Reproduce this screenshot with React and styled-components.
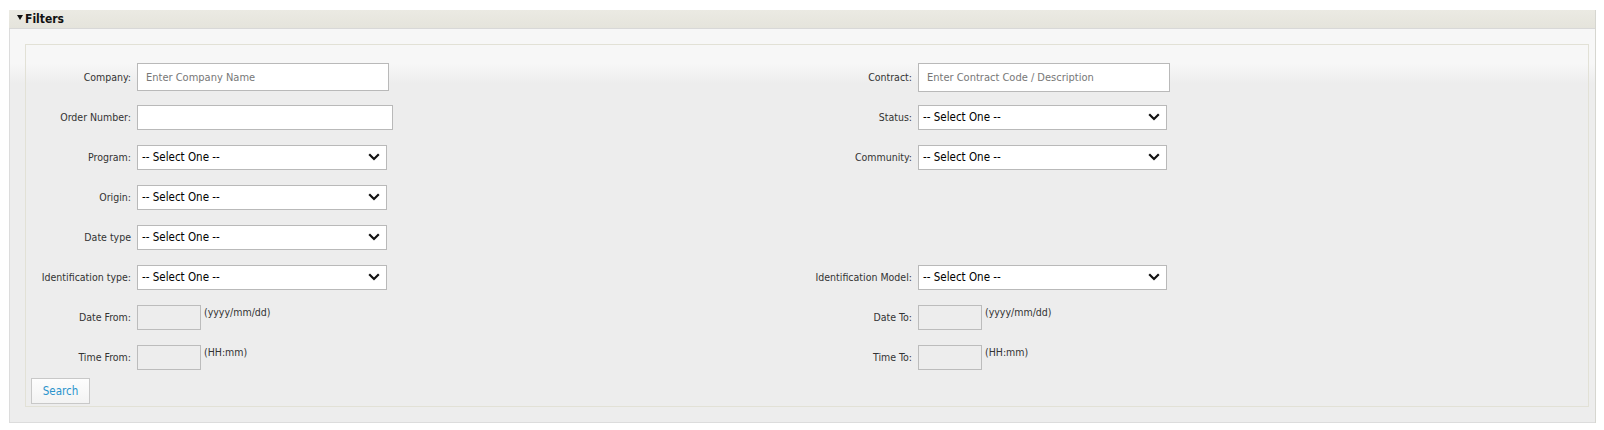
import styled, { createGlobalStyle } from 'styled-components';

const GlobalStyle = createGlobalStyle`
  html, body {
    margin: 0;
    padding: 0;
    background: #ffffff;
    font-family: "DejaVu Sans Condensed", "DejaVu Sans", sans-serif;
  }
`;

const Page = styled.div`
  padding: 10px 8px 7px 9px;
`;

const Panel = styled.section`
  border-right: 1px solid #d6d6d0;
`;

const PanelHeader = styled.div`
  height: 18px;
  background: linear-gradient(180deg, #ebeae3 0%, #e5e4dc 100%);
  display: flex;
  align-items: center;
  padding-left: 8px;
  gap: 2px;
  font-size: 12px;
  font-weight: bold;
  color: #111;
  border-bottom: 1px solid #d8d8d8;
`;

const Caret = styled.span`
  width: 0;
  height: 0;
  border-left: 3.5px solid transparent;
  border-right: 3.5px solid transparent;
  border-top: 5px solid #111;
  margin-bottom: 4px;
`;

const PanelBody = styled.div`
  border-left: 1px solid #dcdcdc;
  border-bottom: 1px solid #dcdcdc;
  background: linear-gradient(180deg, #f7f7f7 0px, #f7f7f7 35px, #ededed 55px, #ededed 100%);
  padding: 15px 6px 15px 15px;
`;

const Fieldset = styled.div`
  border: 1px solid #e2e1d6;
  padding: 12px 0 2px 0;
`;

const FormGrid = styled.div`
  display: grid;
  grid-template-columns: 105px 619px 150px 1fr;
  grid-auto-rows: 40px;
  column-gap: 6px;
  align-items: center;
`;

const Label = styled.label`
  text-align: right;
  font-size: 10.5px;
  color: #333;
  white-space: nowrap;
`;

const FieldCell = styled.div`
  display: flex;
  align-items: center;
  gap: 3px;
`;

const TextInput = styled.input`
  box-sizing: border-box;
  width: ${p => p.$w}px;
  height: ${p => p.$h}px;
  border: 1px solid #b9b9b9;
  background: #fff;
  padding: 0 8px;
  font-family: inherit;
  font-size: 11px;
  color: #333;
  outline: none;

  &::placeholder {
    color: #777;
  }
`;

const SmallInput = styled.input`
  box-sizing: border-box;
  width: 64px;
  height: 25px;
  border: 1px solid #bcbcbc;
  background: #ededed;
  outline: none;
`;

const Hint = styled.span`
  font-size: 10.5px;
  color: #333;
  align-self: flex-start;
  margin-top: 1px;
`;

const SelectBox = styled.div`
  box-sizing: border-box;
  width: ${p => p.$w}px;
  height: 25px;
  border: 1px solid #b9b9b9;
  background: #fff;
  display: flex;
  align-items: center;
  justify-content: space-between;
  padding: 0 6px 0 4px;
  font-size: 11.5px;
  color: #000;
`;

const ButtonRow = styled.div`
  padding: 1px 0 0 5px;
`;

const SearchButton = styled.button`
  box-sizing: border-box;
  display: block;
  width: 59px;
  height: 26px;
  border: 1px solid #c8c8c8;
  background: linear-gradient(180deg, #fdfdfd 0%, #f3f3f3 100%);
  color: #2b93cc;
  font-family: inherit;
  font-size: 11.5px;
  cursor: pointer;
`;

const Chevron = () => (
  <svg width="12" height="8" viewBox="0 0 12 8">
    <path d="M1.2 1.3 L6 6 L10.8 1.3" fill="none" stroke="#111" strokeWidth="2.2" />
  </svg>
);

const Select = ({ w = 250 }) => (
  <SelectBox $w={w}>
    <span>-- Select One --</span>
    <Chevron />
  </SelectBox>
);

const Empty = () => <span />;

const App = () => (
  <>
    <GlobalStyle />
    <Page>
      <Panel>
        <PanelHeader>
          <Caret />
          Filters
        </PanelHeader>
        <PanelBody>
          <Fieldset>
            <FormGrid>
              <Label>Company:</Label>
              <FieldCell>
                <TextInput $w={252} $h={28} placeholder="Enter Company Name" />
              </FieldCell>
              <Label>Contract:</Label>
              <FieldCell>
                <TextInput $w={252} $h={29} placeholder="Enter Contract Code / Description" />
              </FieldCell>

              <Label>Order Number:</Label>
              <FieldCell>
                <TextInput $w={256} $h={25} />
              </FieldCell>
              <Label>Status:</Label>
              <FieldCell>
                <Select w={249} />
              </FieldCell>

              <Label>Program:</Label>
              <FieldCell>
                <Select />
              </FieldCell>
              <Label>Community:</Label>
              <FieldCell>
                <Select w={249} />
              </FieldCell>

              <Label>Origin:</Label>
              <FieldCell>
                <Select />
              </FieldCell>
              <Empty />
              <Empty />

              <Label>Date type</Label>
              <FieldCell>
                <Select />
              </FieldCell>
              <Empty />
              <Empty />

              <Label>Identification type:</Label>
              <FieldCell>
                <Select />
              </FieldCell>
              <Label>Identification Model:</Label>
              <FieldCell>
                <Select w={249} />
              </FieldCell>

              <Label>Date From:</Label>
              <FieldCell>
                <SmallInput />
                <Hint>(yyyy/mm/dd)</Hint>
              </FieldCell>
              <Label>Date To:</Label>
              <FieldCell>
                <SmallInput />
                <Hint>(yyyy/mm/dd)</Hint>
              </FieldCell>

              <Label>Time From:</Label>
              <FieldCell>
                <SmallInput />
                <Hint>(HH:mm)</Hint>
              </FieldCell>
              <Label>Time To:</Label>
              <FieldCell>
                <SmallInput />
                <Hint>(HH:mm)</Hint>
              </FieldCell>
            </FormGrid>
            <ButtonRow>
              <SearchButton>Search</SearchButton>
            </ButtonRow>
          </Fieldset>
        </PanelBody>
      </Panel>
    </Page>
  </>
);

export default App;
